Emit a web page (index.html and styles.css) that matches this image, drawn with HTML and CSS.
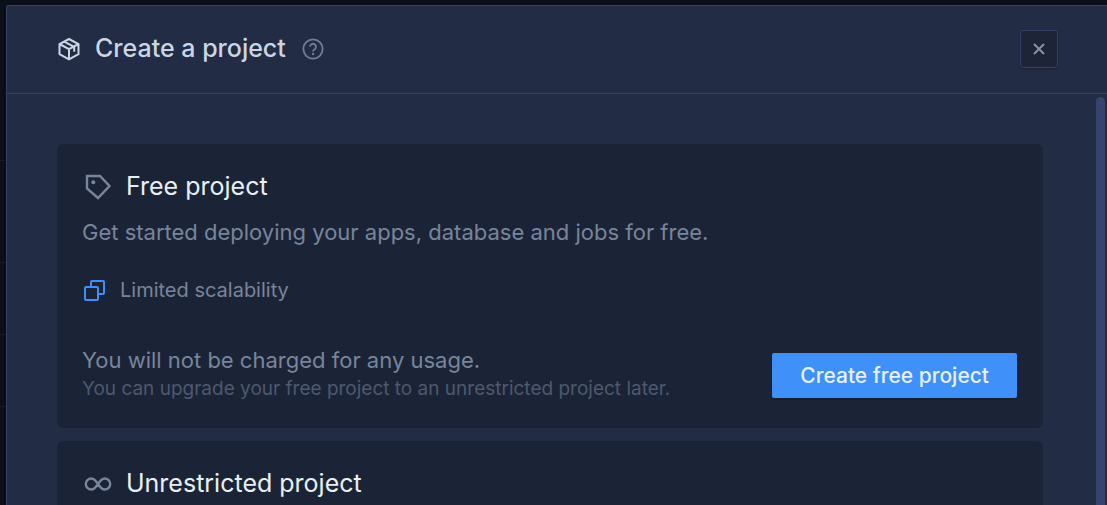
FILE: index.html
```html
<!DOCTYPE html>
<html lang="en">
<head>
<meta charset="utf-8">
<meta name="viewport" content="width=device-width, initial-scale=1">
<title>Create a project</title>
<link rel="stylesheet" href="styles.css">
</head>
<body>
<div class="backdrop">
  <div class="backdrop-row backdrop-row-head"></div>
  <div class="backdrop-row backdrop-row-tall"></div>
  <div class="backdrop-row"></div>
  <div class="backdrop-row"></div>
</div>
<main class="modal" role="dialog" aria-labelledby="modal-title">
  <header class="modal-header">
    <svg class="icon-box" viewBox="0 0 24 24" aria-hidden="true"><path d="M12 2 21.500 7v10.200L12 22.300 2.500 17.200V7zM2.500 7 12 12.200 21.500 7M12 12.200v10M7.200 4.600l10 5.200v5"/></svg>
    <h1 class="modal-title" id="modal-title">Create a project</h1>
    <button class="help" type="button" aria-label="Help">
      <svg class="icon-help" viewBox="0 0 24 24" aria-hidden="true"><circle cx="12" cy="12" r="10.500"/><path d="M8.800 9.600a3.200 3.200 0 1 1 5 2.600c-1.200.8-1.800 1.300-1.800 2.500"/><circle class="dot" cx="12" cy="17.500" r="1.300"/></svg>
    </button>
    <button class="close" type="button" aria-label="Close">
      <svg class="icon-close" viewBox="0 0 12 12" aria-hidden="true"><path d="M1 1l10 10M11 1 1 11"/></svg>
    </button>
  </header>
  <div class="modal-body">
    <section class="card">
      <h2 class="card-title">
        <svg class="icon-card" viewBox="0 0 28 28" aria-hidden="true"><path d="M3 4h13l9.500 10L14 26 3 16.500z"/><circle class="dot" cx="9.300" cy="10.300" r="2"/></svg>
        Free project
      </h2>
      <p class="lead">Get started deploying your apps, database and jobs for free.</p>
      <ul class="features">
        <li class="feature">
          <svg class="icon-scale" viewBox="0 0 24 24" aria-hidden="true"><rect x="3" y="9" width="13" height="13" rx="1"/><path d="M9 9V4q0-1 1-1h11q1 0 1 1v11q0 1-1 1h-5"/></svg>
          Limited scalability
        </li>
      </ul>
      <div class="card-footer">
        <div class="pricing">
          <p class="lead">You will not be charged for any usage.</p>
          <p class="note">You can upgrade your free project to an unrestricted project later.</p>
        </div>
        <button class="primary" type="button">Create free project</button>
      </div>
    </section>
    <section class="card">
      <h2 class="card-title">
        <svg class="icon-card" viewBox="0 0 28 28" aria-hidden="true"><path d="M14 15c-2.200-3.500-4-5.500-6.700-5.500a5.500 5.500 0 0 0 0 11c2.700 0 4.500-2 6.700-5.500s4-5.500 6.700-5.500a5.500 5.500 0 0 1 0 11c-2.700 0-4.500-2-6.700-5.500z"/></svg>
        Unrestricted project
      </h2>
    </section>
  </div>
  <div class="scrollbar" aria-hidden="true"></div>
</main>
</body>
</html>
```
FILE: styles.css
```css
* { box-sizing: border-box; }

body {
  margin: 0;
  height: 100vh;
  overflow: hidden;
  background: #0d111b;
  color: #78859b;
  font-family: Inter, "Liberation Sans", sans-serif;
}

h1, h2, p, ul { margin: 0; padding: 0; }
svg { flex: none; fill: none; stroke: currentColor; stroke-width: 2; }
.dot { fill: currentColor; stroke: none; }
button { font: inherit; cursor: pointer; }

.backdrop { position: absolute; inset: 0; z-index: -1; }
.backdrop-row { height: 72px; border-bottom: 1px solid #171d35; }
.backdrop-row-head { height: 161px; }
.backdrop-row-tall { height: 102px; }

.modal {
  position: relative;
  height: calc(100vh - 5px);
  margin: 5px 0 0 6px;
  overflow: hidden;
  background: #222c44;
  border: solid #33416b;
  border-width: 1px 0 0 1px;
  border-top-left-radius: 3px;
  box-shadow: 0 0 8px rgba(0, 0, 0, 0.4);
}

.modal-header {
  display: flex;
  align-items: center;
  height: 88px;
  padding: 0 49px 1px 50px;
  border-bottom: 1px solid #33416b;
}
.icon-box { width: 24px; height: 24px; margin-right: 14px; color: #cad6e4; }
.modal-title { padding-bottom: 2px; color: #cad6e4; font-size: 25px; line-height: 32px; font-weight: 500; }
.help { display: flex; margin-left: 16px; padding: 0; color: #707c98; background: none; border: 0; }
.icon-help { width: 22px; height: 22px; }
.close {
  display: flex;
  align-items: center;
  justify-content: center;
  width: 38px;
  height: 38px;
  margin-left: auto;
  padding: 0;
  color: #8591a7;
  background: #1d2438;
  border: 1px solid #33416b;
  border-radius: 3px;
  box-shadow: 0 1px 2px rgba(0, 0, 0, 0.3);
}
.icon-close { width: 12px; height: 12px; }

.modal-body { display: grid; gap: 13px; padding: 50px 64px 50px 50px; }
.card { padding: 26px 26px 24px 25px; background: #1b2436; border-radius: 6px; }
.card-title {
  display: flex;
  align-items: center;
  gap: 14px;
  color: #e8eff5;
  font-size: 25px;
  line-height: 32px;
  font-weight: 400;
}
.icon-card { width: 28px; height: 28px; margin-left: 2px; color: #78859b; stroke-width: 2.4; }
.lead { font-size: 22px; line-height: 28px; }
.card-title + .lead { margin-top: 16px; }
.features { margin: 30px 0 42px; list-style: none; }
.feature { display: flex; align-items: center; gap: 14px; font-size: 20px; line-height: 28px; }
.icon-scale { width: 24px; height: 24px; color: #3e8ff7; }
.card-footer { display: flex; align-items: center; justify-content: space-between; }
.note { color: #4d596e; font-size: 19px; line-height: 30px; }
.primary {
  padding: 8px 28px;
  color: #e8f1fd;
  background: #3f91f9;
  border: 0;
  border-radius: 2px;
  box-shadow: 0 1px 2px rgba(0, 0, 0, 0.3);
  font-size: 21px;
  line-height: 29px;
  font-weight: 500;
}
.scrollbar {
  position: absolute;
  top: 91px;
  right: 2px;
  bottom: -8px;
  width: 9px;
  background: #36436e;
  border-radius: 5px;
}
```
